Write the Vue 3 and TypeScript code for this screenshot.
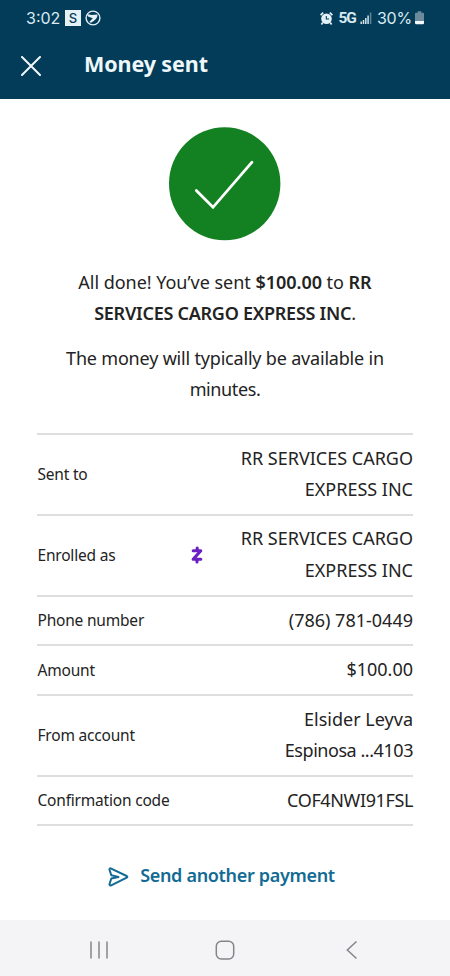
<script setup lang="ts">
interface Row {
  label: string
  lines: string[]
  kind: string
  zelle?: boolean
}

const rows: Row[] = [
  { label: 'Sent to', lines: ['RR SERVICES CARGO', 'EXPRESS INC'], kind: 'name' },
  { label: 'Enrolled as', lines: ['RR SERVICES CARGO', 'EXPRESS INC'], kind: 'name', zelle: true },
  { label: 'Phone number', lines: ['(786) 781-0449'], kind: 'phone' },
  { label: 'Amount', lines: ['$100.00'], kind: 'amount' },
  { label: 'From account', lines: ['Elsider Leyva', 'Espinosa ...4103'], kind: 'account' },
  { label: 'Confirmation code', lines: ['COF4NWI91FSL'], kind: 'code' },
]
</script>

<template>
  <div class="screen">
    <header class="top">
      <div class="status">
        <span class="time">3:02</span>
        <span class="s-badge">S</span>
        <svg class="app-icon" width="16" height="16" viewBox="0 0 16 16">
          <circle cx="8" cy="8" r="6.9" fill="none" stroke="#e4f1f7" stroke-width="1.4" />
          <path d="M1.800 4 6.500 5 12.500 4.600Q12.800 9 6 12.800L4.300 12 7.800 8.200 3 6.500Z" fill="#e4f1f7" />
        </svg>
        <span class="spacer"></span>
        <svg class="alarm" width="13" height="13" viewBox="0 0 13 13">
          <circle cx="6.5" cy="6.7" r="5.3" fill="#e4f1f7" />
          <path d="M.6 3.200 3.200.7M12.400 3.200 9.800.7M2.8 10.6 1.4 12.5M10.2 10.6l1.400 1.900" stroke="#e4f1f7" stroke-width="1.700" />
          <path d="M6.3 4v3h2.8" fill="none" stroke="#033c59" stroke-width="1.1" />
        </svg>
        <span class="net">5G</span>
        <svg class="signal" width="12" height="12" viewBox="0 0 12 12">
          <path d="M1.2 9.5V12M3.5 8v4M5.8 6v6M8.1 3.5V12" stroke="#d3e3ec" stroke-width="1.5" />
          <path d="M10.6.5V12" stroke="#5f8297" stroke-width="1.5" />
        </svg>
        <span class="percent">30%</span>
        <svg class="battery" width="9" height="14" viewBox="0 0 9 14">
          <path d="M2.7.3h3.6v1.5H8q1 0 1 1V10H0V2.800q0-1 1-1h1.700Z" fill="#6c8a9b" />
          <path d="M0 10h9v2q0 1.200-1.200 1.200H1.200Q0 13.200 0 12Z" fill="#f3f8fa" />
        </svg>
      </div>
      <div class="title-bar">
        <svg class="close" width="20" height="20" viewBox="0 0 20 20">
          <path d="m1 1 18 18M19 1 1 19" stroke="#f2f7f9" stroke-width="2" stroke-linecap="round" />
        </svg>
        <h1>Money sent</h1>
      </div>
    </header>

    <main>
      <svg class="done" width="112" height="114" viewBox="0 0 112 114">
        <ellipse cx="55.700" cy="56.700" rx="55.700" ry="56.500" fill="#138121" />
        <path d="M27.300 63.500 44 80.300 83 35.200" fill="none" stroke="#fff" stroke-width="2.800" stroke-linecap="round" />
      </svg>

      <p class="message">
        <span class="m1">All done! You’ve sent <b>$100.00</b> to <b>RR</b></span>
        <span class="m2"><b>SERVICES CARGO EXPRESS INC</b>.</span>
      </p>
      <p class="message">
        <span class="m3">The money will typically be available in</span>
        <span class="m4">minutes.</span>
      </p>

      <dl>
        <div v-for="row in rows" :key="row.label" class="row">
          <dt>{{ row.label }}</dt>
          <svg v-if="row.zelle" class="zelle" width="12" height="18" viewBox="0 0 12 18">
            <path d="M2.200 4.700h7.600L2.200 13.300h7.600M6.200 2v2.700M6 13.300V16" fill="none" stroke="#6a1fc2" stroke-width="3.100" stroke-linecap="round" stroke-linejoin="round" />
          </svg>
          <dd :class="row.kind">
            <span v-for="line in row.lines" :key="line">{{ line }}</span>
          </dd>
        </div>
      </dl>

      <a class="again">
        <svg width="21" height="20" viewBox="0 0 21 20">
          <path d="M1.500 2.700Q1.200.800 3.200 1.600L18.700 9Q20 9.800 18.700 10.600L3.200 18.300Q1.200 19 1.500 17L3.300 11.500 10.500 9.900 3.300 8.200Z" fill="none" stroke="#136b94" stroke-width="2" stroke-linejoin="round" />
        </svg>
        <span>Send another payment</span>
      </a>
    </main>

    <nav>
      <svg width="20" height="20" viewBox="0 0 20 20">
        <path d="M2 1.500v17M10 1.500v17M18 1.500v17" />
      </svg>
      <svg width="20" height="20" viewBox="0 0 20 20">
        <rect x="1.300" y="1.300" width="17.400" height="17.600" rx="5" />
      </svg>
      <svg width="20" height="20" viewBox="0 0 20 20">
        <path d="M15.500 1.500 6.300 10l9.200 8.500" />
      </svg>
    </nav>
  </div>
</template>

<style>
body {
  margin: 0;
  background: #fff;
}
</style>

<style scoped>
.screen {
  width: 450px;
  height: 976px;
  display: flex;
  flex-direction: column;
  overflow: hidden;
  background: #fff;
  color: #232323;
  font-family: "Noto Sans", "Open Sans", sans-serif;
}
.top {
  height: 99px;
  flex: none;
  background: #033c59;
  color: #eef7fa;
}
.status {
  height: 36px;
  box-sizing: border-box;
  padding: 0 26px 0 26px;
  display: flex;
  align-items: center;
  font-family: Inter, Roboto, sans-serif;
  font-size: 16px;
  color: #d9eaf2;
}
.time {
  width: 39px;
}
.s-badge {
  width: 16px;
  height: 16px;
  background: #e4f1f7;
  color: #033c59;
  font-size: 13px;
  font-weight: 500;
  line-height: 16px;
  text-align: center;
}
.app-icon {
  margin-left: 4px;
}
.spacer {
  flex: 1;
}
.net {
  margin-left: 5px;
  font-family: Roboto, sans-serif;
  font-size: 15.500px;
  font-weight: 700;
  letter-spacing: -1px;
}
.signal {
  margin-left: 4px;
}
.percent {
  margin-left: 5px;
  letter-spacing: -0.2px;
}
.battery {
  margin-left: 3px;
}
.title-bar {
  height: 60px;
  padding-left: 21px;
  display: flex;
  align-items: center;
}
.title-bar h1 {
  margin: -4px 0 0 43px;
  font-size: 21.500px;
  line-height: 30px;
  font-weight: 700;
  letter-spacing: -0.100px;
}
main {
  flex: 1;
  padding: 28px 37px 0;
  display: flex;
  flex-direction: column;
}
.done {
  align-self: center;
  flex: none;
}
.message {
  margin: 26px 0 0;
  font-size: 18px;
  line-height: 31.300px;
  text-align: center;
  white-space: nowrap;
}
.message + .message {
  margin-top: 13px;
}
.message span {
  display: block;
}
.message b {
  font-weight: 600;
}
.m1 {
  letter-spacing: -0.030px;
}
.m2 {
  letter-spacing: -0.260px;
}
.m3 {
  letter-spacing: -0.190px;
}
.m4 {
  letter-spacing: -0.400px;
}
dl {
  margin: 28px 0 0;
  border-top: 2px solid #dedede;
}
.row {
  display: flex;
  align-items: center;
  padding: 8px 0 8.350px;
  border-bottom: 2px solid #dedede;
}
dt {
  flex: 1;
  padding-left: 0.500px;
  font-size: 15.500px;
  letter-spacing: -0.200px;
}
.zelle {
  margin-right: 38px;
}
dd {
  margin: 0;
  font-size: 18px;
  line-height: 31.200px;
  text-align: right;
  white-space: nowrap;
}
dd span {
  display: block;
}
.name span {
  position: relative;
  top: -0.500px;
}
.account span:last-child {
  letter-spacing: -0.450px;
}
.code {
  letter-spacing: -0.380px;
}
.again {
  align-self: center;
  margin: 34px 7px 0 0;
  display: flex;
  align-items: center;
  gap: 11px;
  color: #136b94;
  font-size: 18px;
  line-height: 30px;
  font-weight: 600;
  letter-spacing: -0.320px;
}
.again svg {
  position: relative;
  top: 2px;
}
nav {
  height: 56px;
  flex: none;
  display: flex;
  justify-content: space-between;
  align-items: center;
  padding: 3px 89px 0;
  box-sizing: border-box;
  background: #f4f4f7;
}
nav svg {
  fill: none;
  stroke: #858589;
  stroke-width: 1.500px;
}
</style>
